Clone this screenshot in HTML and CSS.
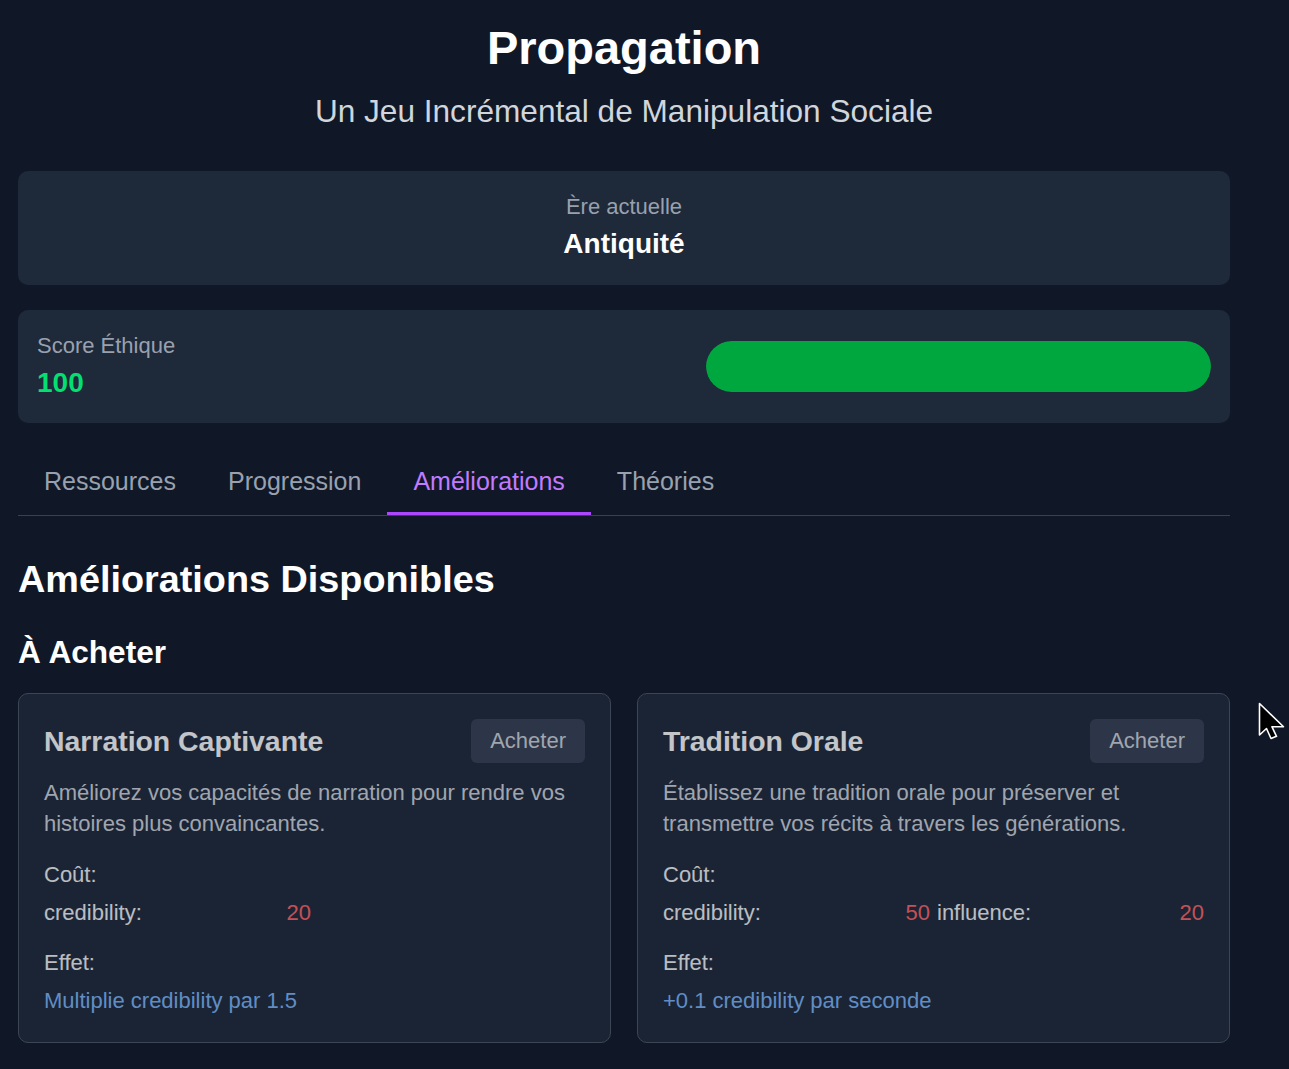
FILE: index.html
```html
<!DOCTYPE html>
<html lang="fr">
<head>
<meta charset="utf-8">
<title>Propagation</title>
<link rel="stylesheet" href="styles.css">
</head>
<body>
<div class="page">
  <header class="header">
    <h1 class="title">Propagation</h1>
    <p class="subtitle">Un Jeu Incrémental de Manipulation Sociale</p>
  </header>

  <section class="panel era">
    <div class="label">Ère actuelle</div>
    <div class="value">Antiquité</div>
  </section>

  <section class="panel score">
    <div class="score-text">
      <div class="label">Score Éthique</div>
      <div class="value green">100</div>
    </div>
    <div class="track"><div class="fill" style="width:100%"></div></div>
  </section>

  <nav class="tabs">
    <button class="tab">Ressources</button>
    <button class="tab">Progression</button>
    <button class="tab active">Améliorations</button>
    <button class="tab">Théories</button>
  </nav>

  <h2 class="section-title">Améliorations Disponibles</h2>
  <h3 class="subsection-title">À Acheter</h3>

  <div class="cards">
    <article class="card">
      <div class="card-head">
        <h4 class="card-title">Narration Captivante</h4>
        <button class="buy">Acheter</button>
      </div>
      <p class="desc">Améliorez vos capacités de narration pour rendre vos histoires plus convaincantes.</p>
      <div class="block cost-block">
        <div class="block-label">Coût:</div>
        <div class="costs">
          <div class="cost"><span>credibility:</span><span class="cost-val">20</span></div>
        </div>
      </div>
      <div class="block effect-block">
        <div class="block-label">Effet:</div>
        <div class="effect">Multiplie credibility par 1.5</div>
      </div>
    </article>

    <article class="card">
      <div class="card-head">
        <h4 class="card-title">Tradition Orale</h4>
        <button class="buy">Acheter</button>
      </div>
      <p class="desc">Établissez une tradition orale pour préserver et transmettre vos récits à travers les générations.</p>
      <div class="block cost-block">
        <div class="block-label">Coût:</div>
        <div class="costs">
          <div class="cost"><span>credibility:</span><span class="cost-val">50</span></div>
          <div class="cost"><span>influence:</span><span class="cost-val">20</span></div>
        </div>
      </div>
      <div class="block effect-block">
        <div class="block-label">Effet:</div>
        <div class="effect">+0.1 credibility par seconde</div>
      </div>
    </article>
  </div>
</div>

<svg class="cursor" width="30" height="40" viewBox="0 0 30 40" aria-hidden="true">
  <path d="M1.5 1.5 V33 L8.5 26.5 L13 36.5 L18.5 34.3 L14 24.8 H25.5 Z" fill="#000" stroke="#fff" stroke-width="1.6" stroke-linejoin="round"/>
</svg>
</body>
</html>
```

FILE: styles.css
```css
html, body {
  margin: 0;
  background: #101828;
}

body {
  font-family: "Liberation Sans", Arial, Helvetica, sans-serif;
  color: #ffffff;
  position: relative;
  min-height: 1069px;
}

.page {
  max-width: 1248px;
  box-sizing: border-box;
  padding: 19px 18px 0;
}

.header {
  text-align: center;
}

.title {
  margin: 0;
  font-size: 47px;
  line-height: 58px;
  font-weight: 700;
  color: #ffffff;
}

.subtitle {
  margin: 15px 0 0;
  font-size: 31.6px;
  line-height: 38px;
  color: #d1d5dc;
}

.panel {
  background: #1e2939;
  border-radius: 10px;
}

.era {
  margin-top: 41px;
  padding: 21px 19px 23px;
  text-align: center;
}

.label {
  font-size: 22px;
  line-height: 30px;
  color: #99a1af;
}

.value {
  margin-top: 4px;
  font-size: 28px;
  line-height: 36px;
  font-weight: 700;
  color: #ffffff;
}

.value.green {
  color: #05df72;
}

.score {
  margin-top: 25px;
  padding: 21px 19px 22px;
  display: flex;
  justify-content: space-between;
  align-items: center;
}

.track {
  width: 505px;
  height: 51px;
  border-radius: 999px;
  background: #364153;
  overflow: hidden;
}

.fill {
  height: 100%;
  background: #00a63e;
  border-radius: 999px;
}

.tabs {
  margin-top: 27px;
  display: flex;
  border-bottom: 1px solid #364153;
}

.tab {
  font-family: inherit;
  font-size: 25px;
  line-height: 30px;
  padding: 16px 26px 16px;
  margin: 0;
  background: none;
  border: none;
  border-bottom: 3px solid transparent;
  color: #99a1af;
}

.tab.active {
  color: #c27aff;
  border-bottom-color: #ad46ff;
}

.section-title {
  margin: 41px 0 0;
  font-size: 37.8px;
  line-height: 45px;
  font-weight: 700;
  color: #ffffff;
}

.subsection-title {
  margin: 31px 0 0;
  font-size: 31.6px;
  line-height: 38px;
  font-weight: 700;
  color: #ffffff;
}

.cards {
  margin-top: 22px;
  display: grid;
  grid-template-columns: 1fr 1fr;
  gap: 26px;
}

.card {
  background: #1e2939;
  border: 1px solid #4b5563;
  border-radius: 10px;
  padding: 25px 25px 26px;
  opacity: 0.75;
}

.card-head {
  display: flex;
  justify-content: space-between;
  align-items: center;
}

.card-title {
  margin: 0;
  font-size: 28.4px;
  line-height: 36px;
  font-weight: 700;
  color: #ffffff;
}

.buy {
  font-family: inherit;
  font-size: 22px;
  line-height: 30px;
  padding: 7px 19px;
  margin: 0;
  border: none;
  border-radius: 6px;
  background: #364153;
  color: #d1d5dc;
}

.desc {
  margin: 14px 0 0;
  font-size: 22px;
  line-height: 31px;
  color: #d1d5dc;
}

.cost-block {
  margin-top: 20px;
}

.effect-block {
  margin-top: 19px;
}

.block-label {
  font-size: 22px;
  line-height: 31px;
  color: #f3f4f6;
}

.costs {
  margin-top: 7px;
  display: grid;
  grid-template-columns: 1fr 1fr;
  column-gap: 7px;
}

.cost {
  display: flex;
  justify-content: space-between;
  font-size: 22px;
  line-height: 31px;
  color: #f3f4f6;
}

.cost-val {
  color: #ff6467;
}

.effect {
  margin-top: 7px;
  font-size: 22px;
  line-height: 31px;
  color: #7db5f8;
}

.cursor {
  position: absolute;
  left: 1258px;
  top: 702px;
  pointer-events: none;
}
```
